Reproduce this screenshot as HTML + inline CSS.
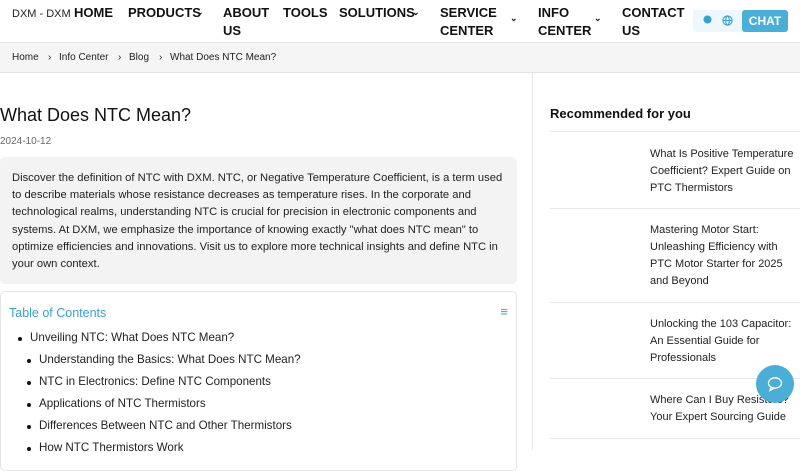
<!DOCTYPE html>
<html><head><meta charset="utf-8"><style>
*{margin:0;padding:0;box-sizing:border-box}
body{width:800px;height:450px;overflow:hidden;font-family:"Liberation Sans",sans-serif;color:#222;background:#fff;position:relative}
.hdr{position:absolute;top:0;left:0;width:800px;height:43px;border-bottom:1px solid #e6e6e6}
.hdr .logo{position:absolute;left:12px;top:8px;font-size:11px;color:#222;white-space:nowrap}
.nav{position:absolute;top:4px;font-size:13px;font-weight:bold;line-height:18px;color:#111;white-space:nowrap}
.chev{position:absolute;font-size:9px;font-weight:bold}
.tools{position:absolute;left:693px;top:10px;width:95px;height:22px;background:#eef7fb;border-radius:3px}
.chat{position:absolute;left:742px;top:10px;width:46px;height:22px;background:#4aaed6;color:#fff;font-size:12px;font-weight:bold;text-align:center;line-height:22px;border-radius:3px}
.bc{position:absolute;top:43px;left:0;width:800px;height:30px;background:#f5f5f5;border-bottom:1px solid #e4e4e4;font-size:10px;color:#222}
.bc span{position:absolute;top:9px}
.left{position:absolute;left:0;top:73px;width:533px;height:377px;border-right:1px solid #e8e8e8}
h1{position:absolute;left:0;top:105px;font-size:18px;font-weight:normal;color:#111}
.date{position:absolute;left:0;top:136px;font-size:10px;color:#666}
.sum{position:absolute;left:0;top:157px;width:517px;height:127px;background:#f3f3f3;border-radius:5px;padding:13px 12px;font-size:11.2px;line-height:17.2px;color:#222}
.toc{position:absolute;left:0;top:291px;width:517px;height:180px;border:1px solid #e6e6e6;border-radius:5px}
.toc .t{position:absolute;left:8px;top:14px;font-size:12.5px;color:#3aa0d0}
.toc .m{position:absolute;right:8px;top:12px;color:#3aa0d0;font-size:13px}
.li{position:absolute;font-size:11.6px;color:#222;white-space:nowrap}
.li:before{content:"";position:absolute;left:-12px;top:6px;width:4px;height:4px;border-radius:50%;background:#111}
.rec{position:absolute;left:550px;top:106px;font-size:13px;font-weight:bold;color:#111}
.hr{position:absolute;left:550px;width:250px;height:1px;background:#e8e8e8}
.it{position:absolute;left:650px;width:150px;font-size:11px;line-height:17px;color:#222}
.fab{position:absolute;left:756px;top:365px;width:38px;height:38px;border-radius:50%;background:#4aaed6}
</style></head><body>
<div class="hdr">
<div class="logo">DXM - DXM</div>
<div class="nav" style="left:74px">HOME</div>
<div class="nav" style="left:128px">PRODUCTS</div><div class="chev" style="left:196px;top:7px">⌄</div>
<div class="nav" style="left:223px">ABOUT<br>US</div>
<div class="nav" style="left:283px">TOOLS</div>
<div class="nav" style="left:339px">SOLUTIONS</div><div class="chev" style="left:412px;top:7px">⌄</div>
<div class="nav" style="left:440px">SERVICE<br>CENTER</div><div class="chev" style="left:510px;top:13px">⌄</div>
<div class="nav" style="left:538px">INFO<br>CENTER</div><div class="chev" style="left:594px;top:13px">⌄</div>
<div class="nav" style="left:622px">CONTACT<br>US</div>
<div class="tools"><svg style="position:absolute;left:10px;top:5px" width="10" height="10"><circle cx="4.5" cy="4.5" r="4" fill="#3aa0d0"/></svg><svg style="position:absolute;left:29px;top:5px" width="11" height="11" viewBox="0 0 12 12" fill="none" stroke="#3aa0d0" stroke-width="1.2"><circle cx="6" cy="6" r="5"/><ellipse cx="6" cy="6" rx="2" ry="5"/><path d="M1 6h10"/></svg></div>
<div class="chat">CHAT</div>
</div>
<div class="bc"><span style="left:12px">Home</span><span style="left:48px">›</span><span style="left:59px">Info Center</span><span style="left:118px">›</span><span style="left:129px">Blog</span><span style="left:159px">›</span><span style="left:170px">What Does NTC Mean?</span></div>
<div class="left"></div>
<h1>What Does NTC Mean?</h1>
<div class="date">2024-10-12</div>
<div class="sum">Discover the definition of NTC with DXM. NTC, or Negative Temperature Coefficient, is a term used to describe materials whose resistance decreases as temperature rises. In the corporate and technological realms, understanding NTC is crucial for precision in electronic components and systems. At DXM, we emphasize the importance of knowing exactly "what does NTC mean" to optimize efficiencies and innovations. Visit us to explore more technical insights and define NTC in your own context.</div>
<div class="toc"><div class="t">Table of Contents</div><div class="m">≡</div></div>
<div class="li" style="left:30px;top:331px">Unveiling NTC: What Does NTC Mean?</div>
<div class="li" style="left:39px;top:353px">Understanding the Basics: What Does NTC Mean?</div>
<div class="li" style="left:39px;top:375px">NTC in Electronics: Define NTC Components</div>
<div class="li" style="left:39px;top:397px">Applications of NTC Thermistors</div>
<div class="li" style="left:39px;top:419px">Differences Between NTC and Other Thermistors</div>
<div class="li" style="left:39px;top:441px">How NTC Thermistors Work</div>
<div class="rec">Recommended for you</div>
<div class="hr" style="top:131px"></div>
<div class="it" style="top:146px">What Is Positive Temperature Coefficient? Expert Guide on PTC Thermistors</div>
<div class="hr" style="top:208px"></div>
<div class="it" style="top:222px">Mastering Motor Start: Unleashing Efficiency with PTC Motor Starter for 2025 and Beyond</div>
<div class="hr" style="top:302px"></div>
<div class="it" style="top:316px">Unlocking the 103 Capacitor: An Essential Guide for Professionals</div>
<div class="hr" style="top:378px"></div>
<div class="it" style="top:392px">Where Can I Buy Resistors? Your Expert Sourcing Guide</div>
<div class="hr" style="top:438px"></div>
<div class="fab"><svg style="position:absolute;left:11px;top:11px" width="16" height="16" viewBox="0 0 16 16" fill="none" stroke="#fff" stroke-width="1.3"><ellipse cx="8" cy="7" rx="6.5" ry="5.2"/><path d="M4 11.5 L3 14.5 L7 12.2"/></svg></div>
</body></html>
